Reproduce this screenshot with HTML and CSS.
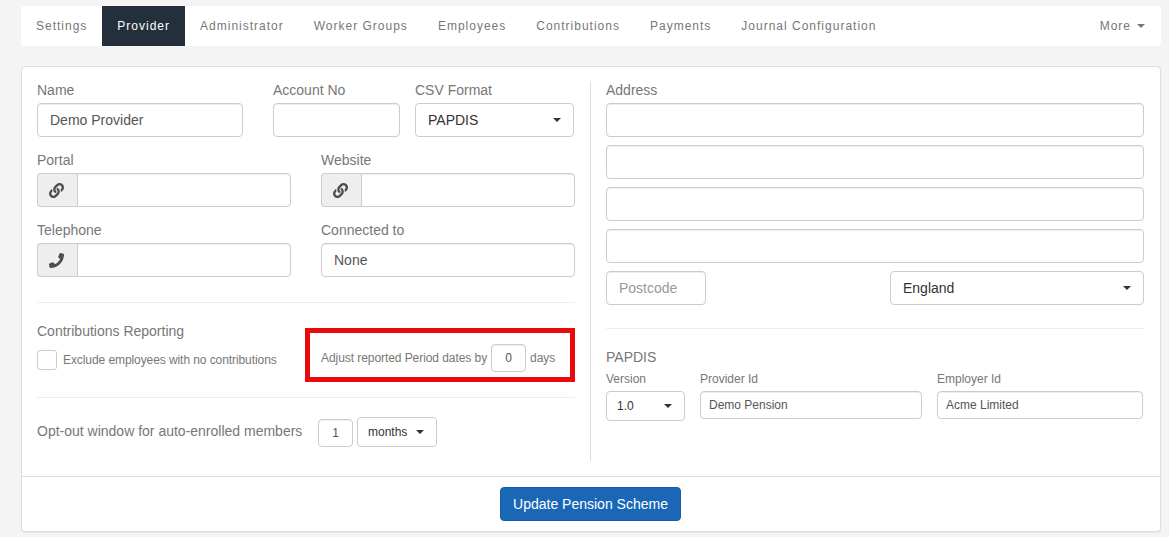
FILE: index.html
```html
<!DOCTYPE html>
<html lang="en">
<head>
<meta charset="utf-8">
<title>Provider</title>
<link rel="stylesheet" href="styles.css">
</head>
<body>
<div class="page">
  <nav class="tabs">
    <a class="tab">Settings</a>
    <a class="tab active">Provider</a>
    <a class="tab">Administrator</a>
    <a class="tab">Worker Groups</a>
    <a class="tab">Employees</a>
    <a class="tab">Contributions</a>
    <a class="tab">Payments</a>
    <a class="tab">Journal Configuration</a>
    <a class="tab more">More <span class="caret caret-light"></span></a>
  </nav>

  <section class="panel">
    <div class="panel-body">
      <div class="col">
        <div class="row-top">
          <div class="field w-name"><label>Name</label><input class="control" value="Demo Provider"></div>
          <div class="field w-account"><label>Account No</label><input class="control"></div>
          <div class="field w-csv"><label>CSV Format</label><button class="control select"><span>PAPDIS</span><span class="caret"></span></button></div>
        </div>
        <div class="row-two">
          <div class="field"><label>Portal</label>
            <div class="group"><span class="addon"><svg class="icon" viewBox="0 0 512 512"><path d="M326.612 185.391c59.747 59.809 58.927 155.698.36 214.59-.11.12-.24.25-.36.37l-67.2 67.2c-59.27 59.27-155.699 59.262-214.96 0-59.27-59.26-59.27-155.7 0-214.96l37.106-37.106c9.84-9.84 26.786-3.3 27.294 10.606.648 17.722 3.826 35.527 9.69 52.721 1.986 5.822.567 12.262-3.783 16.612l-13.087 13.087c-28.026 28.026-28.905 73.66-1.155 101.96 28.024 28.579 74.086 28.749 102.325.51l67.2-67.19c28.191-28.191 28.073-73.757 0-101.83-3.701-3.694-7.429-6.564-10.341-8.569a16.037 16.037 0 0 1-6.947-12.606c-.396-10.567 3.348-21.456 11.698-29.806l21.054-21.055c5.521-5.521 14.182-6.199 20.584-1.731a152.482 152.482 0 0 1 20.522 17.197zM467.547 44.449c-59.261-59.262-155.69-59.27-214.96 0l-67.2 67.2c-.12.12-.25.25-.36.37-58.566 58.892-59.387 154.781.36 214.59a152.454 152.454 0 0 0 20.521 17.196c6.402 4.468 15.064 3.789 20.584-1.731l21.054-21.055c8.35-8.35 12.094-19.239 11.698-29.806a16.037 16.037 0 0 0-6.947-12.606c-2.912-2.005-6.64-4.875-10.341-8.569-28.073-28.073-28.191-73.639 0-101.83l67.2-67.19c28.239-28.239 74.3-28.069 102.325.51 27.75 28.3 26.872 73.934-1.155 101.96l-13.087 13.087c-4.35 4.35-5.769 10.79-3.783 16.612 5.864 17.194 9.042 34.999 9.69 52.721.509 13.906 17.454 20.446 27.294 10.606l37.106-37.106c59.271-59.259 59.271-155.699.001-214.959z"/></svg></span><input class="control joined"></div>
          </div>
          <div class="field"><label>Website</label>
            <div class="group"><span class="addon"><svg class="icon" viewBox="0 0 512 512"><path d="M326.612 185.391c59.747 59.809 58.927 155.698.36 214.59-.11.12-.24.25-.36.37l-67.2 67.2c-59.27 59.27-155.699 59.262-214.96 0-59.27-59.26-59.27-155.7 0-214.96l37.106-37.106c9.84-9.84 26.786-3.3 27.294 10.606.648 17.722 3.826 35.527 9.69 52.721 1.986 5.822.567 12.262-3.783 16.612l-13.087 13.087c-28.026 28.026-28.905 73.66-1.155 101.96 28.024 28.579 74.086 28.749 102.325.51l67.2-67.19c28.191-28.191 28.073-73.757 0-101.83-3.701-3.694-7.429-6.564-10.341-8.569a16.037 16.037 0 0 1-6.947-12.606c-.396-10.567 3.348-21.456 11.698-29.806l21.054-21.055c5.521-5.521 14.182-6.199 20.584-1.731a152.482 152.482 0 0 1 20.522 17.197zM467.547 44.449c-59.261-59.262-155.69-59.27-214.96 0l-67.2 67.2c-.12.12-.25.25-.36.37-58.566 58.892-59.387 154.781.36 214.59a152.454 152.454 0 0 0 20.521 17.196c6.402 4.468 15.064 3.789 20.584-1.731l21.054-21.055c8.35-8.35 12.094-19.239 11.698-29.806a16.037 16.037 0 0 0-6.947-12.606c-2.912-2.005-6.64-4.875-10.341-8.569-28.073-28.073-28.191-73.639 0-101.83l67.2-67.19c28.239-28.239 74.3-28.069 102.325.51 27.75 28.3 26.872 73.934-1.155 101.96l-13.087 13.087c-4.35 4.35-5.769 10.79-3.783 16.612 5.864 17.194 9.042 34.999 9.69 52.721.509 13.906 17.454 20.446 27.294 10.606l37.106-37.106c59.271-59.259 59.271-155.699.001-214.959z"/></svg></span><input class="control joined"></div>
          </div>
          <div class="field"><label>Telephone</label>
            <div class="group"><span class="addon"><svg class="icon" viewBox="0 0 512 512"><path d="M493.4 24.6l-104-24c-11.3-2.6-22.9 3.3-27.5 13.9l-48 112c-4.2 9.8-1.4 21.3 6.9 28l60.6 49.6c-36 76.7-98.9 140.5-177.2 177.2l-49.6-60.6c-6.8-8.3-18.2-11.1-28-6.9l-112 48C3.9 366.5-2 378.1.6 389.4l24 104C27.1 504.2 36.7 512 48 512c256.1 0 464-207.5 464-464 0-11.2-7.7-20.9-18.6-23.4z"/></svg></span><input class="control joined"></div>
          </div>
          <div class="field"><label>Connected to</label><input class="control" value="None"></div>
        </div>
        <hr class="rule rule-a">
        <div class="reporting">
          <div class="reporting-left">
            <div class="title">Contributions Reporting</div>
            <label class="check"><span class="box"></span>Exclude employees with no contributions</label>
          </div>
          <div class="highlight">
            <span>Adjust reported Period dates by</span>
            <input class="control mini" value="0">
            <span>days</span>
          </div>
        </div>
        <hr class="rule rule-b">
        <div class="optout">
          <span class="optout-text">Opt-out window for auto-enrolled members</span>
          <input class="control mini optout-num" value="1">
          <button class="control select small months"><span>months</span><span class="caret"></span></button>
        </div>
      </div>

      <div class="divider"></div>

      <div class="col col-right">
        <label>Address</label>
        <div class="address">
          <input class="control">
          <input class="control">
          <input class="control">
          <input class="control">
          <div class="postcode-row">
            <input class="control postcode" placeholder="Postcode">
            <button class="control select country"><span>England</span><span class="caret"></span></button>
          </div>
        </div>
        <hr class="rule rule-c">
        <div class="title">PAPDIS</div>
        <div class="papdis">
          <div class="papdis-field"><label>Version</label><button class="control select small"><span>1.0</span><span class="caret"></span></button></div>
          <div class="papdis-field"><label>Provider Id</label><input class="control small-input" value="Demo Pension"></div>
          <div class="papdis-field"><label>Employer Id</label><input class="control small-input" value="Acme Limited"></div>
        </div>
      </div>
    </div>
    <div class="panel-footer"><button class="primary">Update Pension Scheme</button></div>
  </section>
</div>
</body>
</html>
```
FILE: styles.css
```css
* { box-sizing: border-box; }
html, body { margin: 0; padding: 0; height: 100%; overflow: hidden; }
body {
  background: #f4f4f4;
  font-family: "Liberation Sans", Arial, sans-serif;
  font-size: 14px;
  color: #777;
}
.page { padding: 6px 8px 0 21px; }

.tabs {
  display: flex;
  height: 40px;
  background: #fff;
  border-radius: 4px;
  overflow: hidden;
}
.tab {
  display: flex;
  align-items: center;
  padding: 0 15px;
  font-size: 12px;
  letter-spacing: 1px;
  color: #777;
}
.tab.active { background: #232f3b; color: #fff; }
.tab.more { margin-left: auto; gap: 6px; padding-right: 16px; }

.panel {
  margin-top: 20px;
  height: 466px;
  background: #fff;
  border: 1px solid #ddd;
  border-radius: 4px;
  box-shadow: 0 1px 1px rgba(0, 0, 0, .05);
}
.panel-body { display: flex; padding: 14px 16px 15px 15px; height: 409px; }
.col { width: 538px; flex: none; }
.col-right { flex: 1; }
.divider { width: 1px; background: #ddd; margin: 0 15px; flex: none; }

label { display: block; line-height: 18px; margin-bottom: 4px; color: #777; }

.control {
  display: block;
  width: 100%;
  height: 34px;
  padding: 0 12px;
  margin: 0;
  background: #fff;
  border: 1px solid #ccc;
  border-radius: 4px;
  box-shadow: inset 0 1px 1px rgba(0, 0, 0, .075);
  font: 14px "Liberation Sans", Arial, sans-serif;
  color: #555;
  outline: none;
}
.control::placeholder { color: #999; opacity: 1; }

.select {
  display: flex;
  align-items: center;
  justify-content: space-between;
  color: #333;
  box-shadow: none;
  text-align: left;
}
.select.small { height: 30px; font-size: 12px; padding: 0 12px 0 10px; }

.caret {
  display: inline-block;
  width: 0;
  height: 0;
  border-top: 4px solid #333;
  border-left: 4px solid transparent;
  border-right: 4px solid transparent;
}
.caret-light { border-top-color: #777; }

.row-top { display: flex; }
.w-name { width: 206px; margin-right: 30px; }
.w-account { width: 127px; margin-right: 15px; }
.w-csv { width: 159px; }

.row-two {
  display: grid;
  grid-template-columns: 254px 254px;
  column-gap: 30px;
  row-gap: 14px;
  margin-top: 14px;
}
.group { display: flex; }
.addon {
  display: flex;
  align-items: center;
  justify-content: center;
  flex: none;
  width: 40px;
  height: 34px;
  padding-right: 2px;
  background: #eee;
  border: 1px solid #ccc;
  border-right: 0;
  border-radius: 4px 0 0 4px;
}
.icon { width: 15px; height: 15px; fill: #4d4d4d; }
.joined { border-radius: 0 4px 4px 0; flex: 1; min-width: 0; }

.rule { border: 0; border-top: 1px solid #eee; margin: 0; }
.rule-a { margin-top: 25px; }
.rule-b { margin-top: 15px; }
.rule-c { margin-top: 23px; }

.reporting { display: flex; justify-content: space-between; margin-top: 19px; }
.title { line-height: 18px; color: #777; }
.rule-c + .title { margin-top: 19px; }
.check {
  display: flex;
  align-items: center;
  gap: 6px;
  margin: 10px 0 0;
  font-size: 12px;
  line-height: 20px;
  letter-spacing: -.08px;
}
.box {
  width: 20px;
  height: 20px;
  border: 1px solid #ccc;
  border-radius: 3px;
  background: #fff;
}
.highlight {
  display: flex;
  align-items: center;
  gap: 4px;
  width: 270px;
  height: 54px;
  margin-top: 6px;
  padding: 11px 10px 5px 11px;
  border: 5px solid #e80a0a;
  font-size: 12px;
  letter-spacing: -.065px;
}
.mini {
  width: 35px;
  height: 28px;
  padding: 0;
  text-align: center;
  font-size: 12px;
  flex: none;
}
.optout { display: flex; align-items: center; height: 30px; margin-top: 19px; }
.optout-text { width: 281px; flex: none; padding-bottom: 2px; }
.optout-num { margin-top: 1px; }
.months { width: 80px; margin-left: 4px; }

.address { display: flex; flex-direction: column; gap: 8px; }
.postcode-row { display: flex; justify-content: space-between; }
.postcode { width: 100px; }
.country { width: 254px; }

.papdis { display: grid; grid-template-columns: 79px 222px 206px; column-gap: 15px; margin-top: 5px; }
.papdis-field label { font-size: 12px; line-height: 16px; margin-bottom: 4px; }
.small-input { height: 28px; padding: 0 8px; font-size: 12px; }

.panel-footer {
  display: flex;
  justify-content: center;
  padding: 10px 1px 10px 0;
  border-top: 1px solid #ddd;
}
.primary {
  width: 181px;
  height: 34px;
  padding: 0;
  background: #1a67b8;
  border: 1px solid #175ea8;
  border-radius: 4px;
  color: #fff;
  font: 14px "Liberation Sans", Arial, sans-serif;
}
```
